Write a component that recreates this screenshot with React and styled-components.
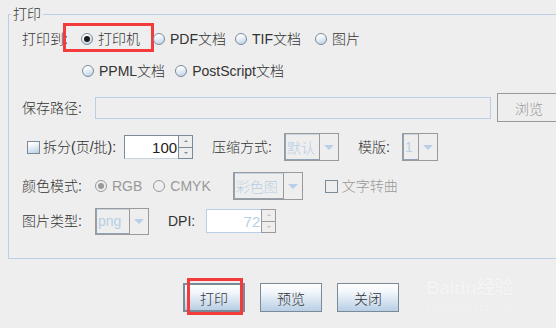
import styled, { createGlobalStyle } from 'styled-components'

const GlobalStyle = createGlobalStyle`
  html, body {
    margin: 0;
    padding: 0;
    background: #eeeeee;
    overflow: hidden;
  }
  body {
    font-family: "Liberation Sans", "Noto Sans CJK SC", sans-serif;
    font-size: 14px;
    font-weight: 300;
    color: #333333;
  }
`

const Page = styled.div`
  position: relative;
  width: 556px;
  height: 328px;
  overflow: hidden;
  padding-top: 6px;
  box-sizing: border-box;
`

const Group = styled.fieldset`
  margin: 0 -30px 0 8px;
  padding: 2px 0 23px 0;
  border: 1px solid #b8cfe5;
  min-width: 0;
`

const Legend = styled.legend`
  margin-left: 2px;
  padding: 0 2px;
  line-height: 16px;
  font-size: 14px;
  color: #333;
`

const Body = styled.div`
  display: flex;
  flex-direction: column;
  padding-left: 13px;
`

const Row = styled.div`
  display: flex;
  align-items: center;
  height: ${p => p.$h}px;
  margin-top: ${p => p.$mt || 0}px;
  white-space: nowrap;
`

const Label = styled.span`
  display: inline-block;
  width: ${p => (p.$w ? `${p.$w}px` : 'auto')};
  margin-left: ${p => p.$ml || 0}px;
  line-height: 16px;
  color: ${p => (p.$dim ? '#999999' : '#333333')};
`

const RadioItem = styled.span`
  position: relative;
  display: inline-flex;
  align-items: center;
  gap: 5px;
  margin-right: ${p => p.$mr ?? 13}px;
  line-height: 16px;
  color: ${p => (p.$disabled ? '#999999' : '#333333')};

  ${p => p.$marked && `
    &::after {
      content: '';
      position: absolute;
      left: -18px;
      right: -14px;
      top: -8px;
      bottom: -5px;
      border: 3px solid #f43b3b;
    }
  `}
`

const RadioDot = styled.span`
  position: relative;
  width: 12px;
  height: 12px;
  box-sizing: border-box;
  border-radius: 50%;
  border: 1px solid ${p => (p.$disabled ? '#9a9a9a' : '#7a8a99')};
  background: ${p => (p.$disabled ? '#eeeeee' : 'linear-gradient(160deg, #ffffff 20%, #b8cfe5 100%)')};

  &::after {
    content: '';
    display: ${p => (p.$checked ? 'block' : 'none')};
    position: absolute;
    left: 2px;
    top: 2px;
    width: 6px;
    height: 6px;
    border-radius: 50%;
    background: ${p => (p.$disabled ? '#999999' : '#1c1c1c')};
  }
`

const Radio = ({ label, checked, disabled, marked, mr }) => (
  <RadioItem $disabled={disabled} $marked={marked} $mr={mr}>
    <RadioDot $checked={checked} $disabled={disabled} />
    {label}
  </RadioItem>
)

const CheckItem = styled.span`
  display: inline-flex;
  align-items: center;
  gap: ${p => p.$gap || 3}px;
  margin-left: ${p => p.$ml || 0}px;
  line-height: 16px;
  color: ${p => (p.$disabled ? '#999999' : '#333333')};
`

const CheckBox = styled.span`
  width: 13px;
  height: 13px;
  box-sizing: border-box;
  border: 1px solid #7a8a99;
  background: ${p => (p.$disabled ? '#eeeeee' : 'linear-gradient(160deg, #ffffff 15%, #b8cfe5 100%)')};
`

const TextField = styled.div`
  width: ${p => p.$w}px;
  height: 22px;
  box-sizing: border-box;
  border: 1px solid #b8cfe5;
  background: #eeeeee;
`

const Button = styled.div`
  position: relative;
  display: flex;
  align-items: center;
  justify-content: center;
  width: ${p => p.$w || 62}px;
  height: 29px;
  box-sizing: border-box;
  margin-left: ${p => p.$ml || 0}px;
  border: ${p => (p.$default ? 2 : 1)}px solid ${p => (p.$disabled ? '#999999' : '#7a8a99')};
  background: ${p => (p.$disabled ? '#eeeeee' : 'linear-gradient(180deg, #ffffff 0%, #f2f6fb 30%, #b8cfe5 100%)')};
  color: ${p => (p.$disabled ? '#999999' : '#333333')};
  font-size: 14px;
  flex-shrink: 0;

  ${p => p.$marked && `
    &::after {
      content: '';
      position: absolute;
      left: 2px;
      top: -7px;
      width: 56px;
      height: 37px;
      box-sizing: border-box;
      border: 3px solid #f43b3b;
    }
  `}
`

const Combo = styled.div`
  display: flex;
  width: ${p => p.$w}px;
  height: ${p => p.$h || 28}px;
  box-sizing: border-box;
  margin-left: ${p => p.$ml || 0}px;
  border: 1px solid #9a9a9a;
`

const ComboText = styled.div`
  flex: 1;
  display: flex;
  align-items: center;
  padding-left: 2px;
  border-right: 1px solid #9a9a9a;
  box-shadow: inset 1px 0 0 #8fa2b6, inset 0 -1px 0 #8fa2b6, inset 0 1px 0 #c6d6e6;
  color: #b8cfe5;
  font-size: 14px;
`

const ComboArrow = styled.div`
  width: 18px;
  display: flex;
  align-items: center;
  justify-content: center;

  &::before {
    content: '';
    border-left: 5px solid transparent;
    border-right: 5px solid transparent;
    border-top: 5px solid #b8cfe5;
  }
`

const Spinner = styled.div`
  display: flex;
  width: ${p => p.$w}px;
  height: 24px;
  margin-left: ${p => p.$ml || 0}px;
`

const SpinField = styled.div`
  flex: 1;
  display: flex;
  align-items: center;
  justify-content: flex-end;
  padding-right: 1px;
  box-sizing: border-box;
  background: #ffffff;
  border: 1px solid ${p => (p.$disabled ? '#b8cfe5' : '#7a8a99')};
  border-right: none;
  ${p => !p.$disabled && 'border-bottom-color: #c8d2dc;'}
  color: ${p => (p.$disabled ? '#b8cfe5' : '#222222')};
  font-size: 15px;
`

const SpinButtons = styled.div`
  width: 15px;
  display: flex;
  flex-direction: column;
`

const SpinBtn = styled.div`
  flex: 1;
  display: flex;
  align-items: center;
  justify-content: center;
  box-sizing: border-box;
  border: 1px solid ${p => (p.$disabled ? '#9a9a9a' : '#7a8a99')};
  ${p => p.$down && 'border-top: none;'}
  background: #eeeeee;

  &::before {
    content: '';
    border-left: 2px solid transparent;
    border-right: 2px solid transparent;
    ${p => (p.$down ? 'border-top' : 'border-bottom')}: 2px solid ${p => (p.$disabled ? '#c0c0c0' : '#7a8a99')};
  }
`

const Spin = ({ value, w, ml, disabled }) => (
  <Spinner $w={w} $ml={ml}>
    <SpinField $disabled={disabled}>{value}</SpinField>
    <SpinButtons>
      <SpinBtn $disabled={disabled} />
      <SpinBtn $disabled={disabled} $down />
    </SpinButtons>
  </Spinner>
)

const Select = ({ value, w, h, ml }) => (
  <Combo $w={w} $h={h} $ml={ml}>
    <ComboText>{value}</ComboText>
    <ComboArrow />
  </Combo>
)

const Footer = styled.div`
  display: flex;
  gap: 15px;
  padding-left: 183px;
  margin-top: 24px;
`

const Watermark = styled.div`
  position: absolute;
  left: 426px;
  top: 276px;
  display: flex;
  flex-direction: column;
  color: rgba(255, 255, 255, 0.6);
  text-shadow: 0 0 1px rgba(0, 0, 0, 0.05);
  font-family: "Liberation Sans", "Noto Sans CJK SC", sans-serif;
  font-weight: bold;
  pointer-events: none;
`

const MarkTitle = styled.span`
  font-size: 19px;
  line-height: 24px;
  letter-spacing: -0.5px;
`

const MarkSub = styled.span`
  font-size: 11px;
  font-weight: normal;
  line-height: 14px;
  letter-spacing: 0.3px;
`

export default function App() {
  return (
    <Page>
      <GlobalStyle />
      <Group>
        <Legend>打印</Legend>
        <Body>
          <Row $h={30}>
            <Label $w={59}>打印到:</Label>
            <Radio label="打印机" checked marked />
            <Radio label="PDF文档" mr={9} />
            <Radio label="TIF文档" mr={14} />
            <Radio label="图片" />
          </Row>
          <Row $h={26} $mt={4}>
            <Label $w={60} />
            <Radio label="PPML文档" mr={10} />
            <Radio label="PostScript文档" />
          </Row>
          <Row $h={29} $mt={9}>
            <Label $w={73}>保存路径:</Label>
            <TextField $w={396} />
            <Button $w={64} $ml={6} $disabled>浏览</Button>
          </Row>
          <Row $h={28} $mt={11}>
            <CheckItem $ml={5}>
              <CheckBox />
              拆分(页/批):
            </CheckItem>
            <Spin value="100" w={69} ml={8} />
            <Label $ml={19}>压缩方式:</Label>
            <Select value="默认" w={55} ml={12} />
            <Label $ml={19}>模版:</Label>
            <Select value="1" w={36} ml={12} />
          </Row>
          <Row $h={28} $mt={11}>
            <Label $w={73}>颜色模式:</Label>
            <Radio label="RGB" checked disabled mr={11} />
            <Radio label="CMYK" disabled mr={0} />
            <Select value="彩色图" w={70} ml={22} />
            <CheckItem $ml={22} $gap={4} $disabled>
              <CheckBox $disabled />
              文字转曲
            </CheckItem>
          </Row>
          <Row $h={28} $mt={7}>
            <Label $w={73}>图片类型:</Label>
            <Select value="png" w={54} h={27} />
            <Label $ml={19}>DPI:</Label>
            <Spin value="72" w={70} ml={11} disabled />
          </Row>
        </Body>
      </Group>
      <Footer>
        <Button $default $marked>打印</Button>
        <Button>预览</Button>
        <Button>关闭</Button>
      </Footer>
      <Watermark>
        <MarkTitle>Baidu经验</MarkTitle>
        <MarkSub>jingyan.baidu.com</MarkSub>
      </Watermark>
    </Page>
  )
}
